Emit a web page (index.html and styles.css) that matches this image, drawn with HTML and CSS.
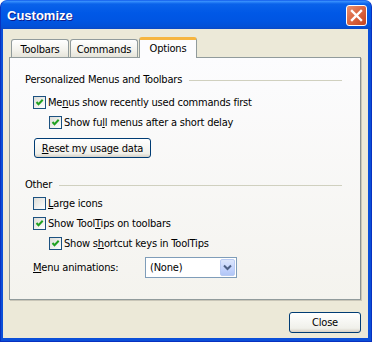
FILE: index.html
```html
<!DOCTYPE html>
<html lang="en">
<head>
    <meta charset="UTF-8">
    <title>Customize</title>
    <link rel="stylesheet" href="styles.css">
</head>
<body>
    <div class="window">
        <div class="titlebar">
            <span class="title">Customize</span>
            <span class="close-x">
                <svg width="13" height="13" viewBox="0 0 13 13"><path d="M2 2 L11 11 M11 2 L2 11" stroke="#fff" stroke-width="2.4" stroke-linecap="square"/></svg>
            </span>
        </div>
        <div class="client">
            <div class="tabs">
                <div class="tab tab-toolbars">Toolbars</div>
                <div class="tab tab-commands">Commands</div>
                <div class="tab tab-active">Options</div>
            </div>
            <div class="panel">
                <div class="group-head">
                    <span>Personalized Menus and Toolbars</span>
                    <span class="line"></span>
                </div>
                <div class="row first">
                    <span class="cb"><svg width="11" height="11" viewBox="0 0 11 11"><path d="M2.5 5 L4.5 7.2 L8.7 2.8" fill="none" stroke="#21a121" stroke-width="2"/></svg></span>
                    <span>Me<u>n</u>us show recently used commands first</span>
                </div>
                <div class="row sub">
                    <span class="cb"><svg width="11" height="11" viewBox="0 0 11 11"><path d="M2.5 5 L4.5 7.2 L8.7 2.8" fill="none" stroke="#21a121" stroke-width="2"/></svg></span>
                    <span>Show fu<u>l</u>l menus after a short delay</span>
                </div>
                <div class="btn reset"><u>R</u>eset my usage data</div>

                <div class="group-head other">
                    <span>Other</span>
                    <span class="line"></span>
                </div>
                <div class="row first-other">
                    <span class="cb"></span>
                    <span><u>L</u>arge icons</span>
                </div>
                <div class="row">
                    <span class="cb"><svg width="11" height="11" viewBox="0 0 11 11"><path d="M2.5 5 L4.5 7.2 L8.7 2.8" fill="none" stroke="#21a121" stroke-width="2"/></svg></span>
                    <span>Show Tool<u>T</u>ips on toolbars</span>
                </div>
                <div class="row sub">
                    <span class="cb"><svg width="11" height="11" viewBox="0 0 11 11"><path d="M2.5 5 L4.5 7.2 L8.7 2.8" fill="none" stroke="#21a121" stroke-width="2"/></svg></span>
                    <span>Show s<u>h</u>ortcut keys in ToolTips</span>
                </div>
                <div class="anim">
                    <span class="anim-label"><u>M</u>enu animations:</span>
                    <div class="select">
                        <span class="select-text">(None)</span>
                        <span class="select-btn">
                            <svg width="9" height="7" viewBox="0 0 9 7"><path d="M1 1.5 L4.5 5 L8 1.5" fill="none" stroke="#4d6185" stroke-width="2"/></svg>
                        </span>
                    </div>
                </div>
            </div>
            <div class="footer">
                <div class="btn close">Close</div>
            </div>
        </div>
    </div>
</body>
</html>
```

FILE: styles.css
```css
body {
    margin: 0;
    padding: 0;
    background-color: #ffffff;
    font-family: "DejaVu Sans Condensed", "Liberation Sans", sans-serif;
    font-size: 11px;
    letter-spacing: -0.2px;
    color: #000000;
}
u {
    text-decoration: underline;
    text-underline-offset: 1px;
}
.window {
    width: 372px;
    height: 342px;
    display: flex;
    flex-direction: column;
    background: #0b4fd8;
    border-radius: 7px 7px 0 0;
    box-sizing: border-box;
    border: 1px solid #0831c0;
    border-top-color: #1e6bf0;
    overflow: hidden;
}
.titlebar {
    height: 28px;
    display: flex;
    align-items: center;
    justify-content: space-between;
    padding: 0 4px 0 6px;
    background: linear-gradient(#3d95ff 0, #0a62ea 3px, #0058e6 12px, #0055e2 20px, #0350d6 26px, #0a47c4 28px);
}
.title {
    color: #ffffff;
    font-family: "Liberation Sans", sans-serif;
    font-weight: bold;
    font-size: 13px;
    letter-spacing: 0;
    text-shadow: 1px 1px #0f1b8a;
    padding-top: 1px;
}
.close-x {
    width: 19px;
    height: 19px;
    border: 1px solid #ffffff;
    border-radius: 3px;
    background: linear-gradient(135deg, #e9906f 0%, #dc6a45 45%, #c4431f 100%);
    display: flex;
    align-items: center;
    justify-content: center;
    margin-top: 1px;
}
.client {
    flex: 1;
    margin: 0 3px 3px 2px;
    background-color: #ece9d8;
    padding: 8px 7px 0 6px;
    display: flex;
    flex-direction: column;
}
.tabs {
    display: flex;
    align-items: flex-end;
    height: 21px;
    padding-left: 2px;
    position: relative;
    z-index: 1;
}
.tab {
    height: 18px;
    box-sizing: border-box;
    border: 1px solid #919b9c;
    border-bottom: none;
    border-radius: 3px 3px 0 0;
    background: linear-gradient(#ffffff, #f3f2ec 60%, #e6e4da);
    display: flex;
    align-items: center;
    justify-content: center;
    padding-top: 2px;
    margin-bottom: 1px;
}
.tab-toolbars {
    width: 58px;
    margin-right: 1px;
}
.tab-commands {
    width: 68px;
    margin-right: 1px;
}
.tab-active {
    width: 58px;
    height: 21px;
    margin-bottom: 0;
    border-top: 3px solid #f6b540;
    background: #fcfcfe;
    padding-top: 0;
    padding-bottom: 2px;
}
.panel {
    height: 243px;
    box-sizing: border-box;
    border: 1px solid #919b9c;
    border-right-color: #8a9293;
    box-shadow: 1px 1px 0 #c9c6b8;
    background: linear-gradient(#fcfcfe, #f4f3ee);
    padding: 15px 18px 0 15px;
    margin-top: -1px;
}
.group-head {
    height: 13px;
    display: flex;
    align-items: center;
}
.group-head .line {
    flex: 1;
    height: 1px;
    background-color: #d0d0bf;
    margin-left: 7px;
    margin-top: 1px;
}
.group-head.other {
    margin-top: 20px;
}
.row {
    height: 13px;
    display: flex;
    align-items: center;
    margin-top: 7px;
    margin-left: 8px;
}
.row.first {
    margin-top: 10px;
}
.row.first-other {
    margin-top: 6px;
}
.row.sub {
    margin-left: 24px;
}
.cb {
    width: 13px;
    height: 13px;
    box-sizing: border-box;
    border: 1px solid #1c5180;
    background: linear-gradient(135deg, #dcdcd7, #ffffff);
    margin-right: 2px;
    flex-shrink: 0;
}
.cb svg {
    display: block;
}
.btn {
    box-sizing: border-box;
    border: 1px solid #003c74;
    border-radius: 3px;
    background: linear-gradient(#ffffff, #f0f0ea 80%, #d6d0c5);
    display: flex;
    align-items: center;
    justify-content: center;
}
.reset {
    width: 117px;
    height: 20px;
    margin: 9px 0 0 9px;
}
.anim {
    display: flex;
    align-items: center;
    margin: 7px 0 0 8px;
}
.anim-label {
    width: 112px;
}
.select {
    width: 92px;
    height: 21px;
    box-sizing: border-box;
    border: 1px solid #7f9db9;
    background: #ffffff;
    display: flex;
    align-items: center;
    justify-content: space-between;
    padding: 0 1px 0 4px;
}
.select-btn {
    width: 15px;
    height: 17px;
    box-sizing: border-box;
    border: 1px solid #b9cbf3;
    border-radius: 2px;
    background: linear-gradient(#dce6fb, #c3d3fd 60%, #b1c6f6);
    display: flex;
    align-items: center;
    justify-content: center;
}
.footer {
    display: flex;
    justify-content: flex-end;
    padding-top: 12px;
}
.close {
    width: 72px;
    height: 21px;
}
```
